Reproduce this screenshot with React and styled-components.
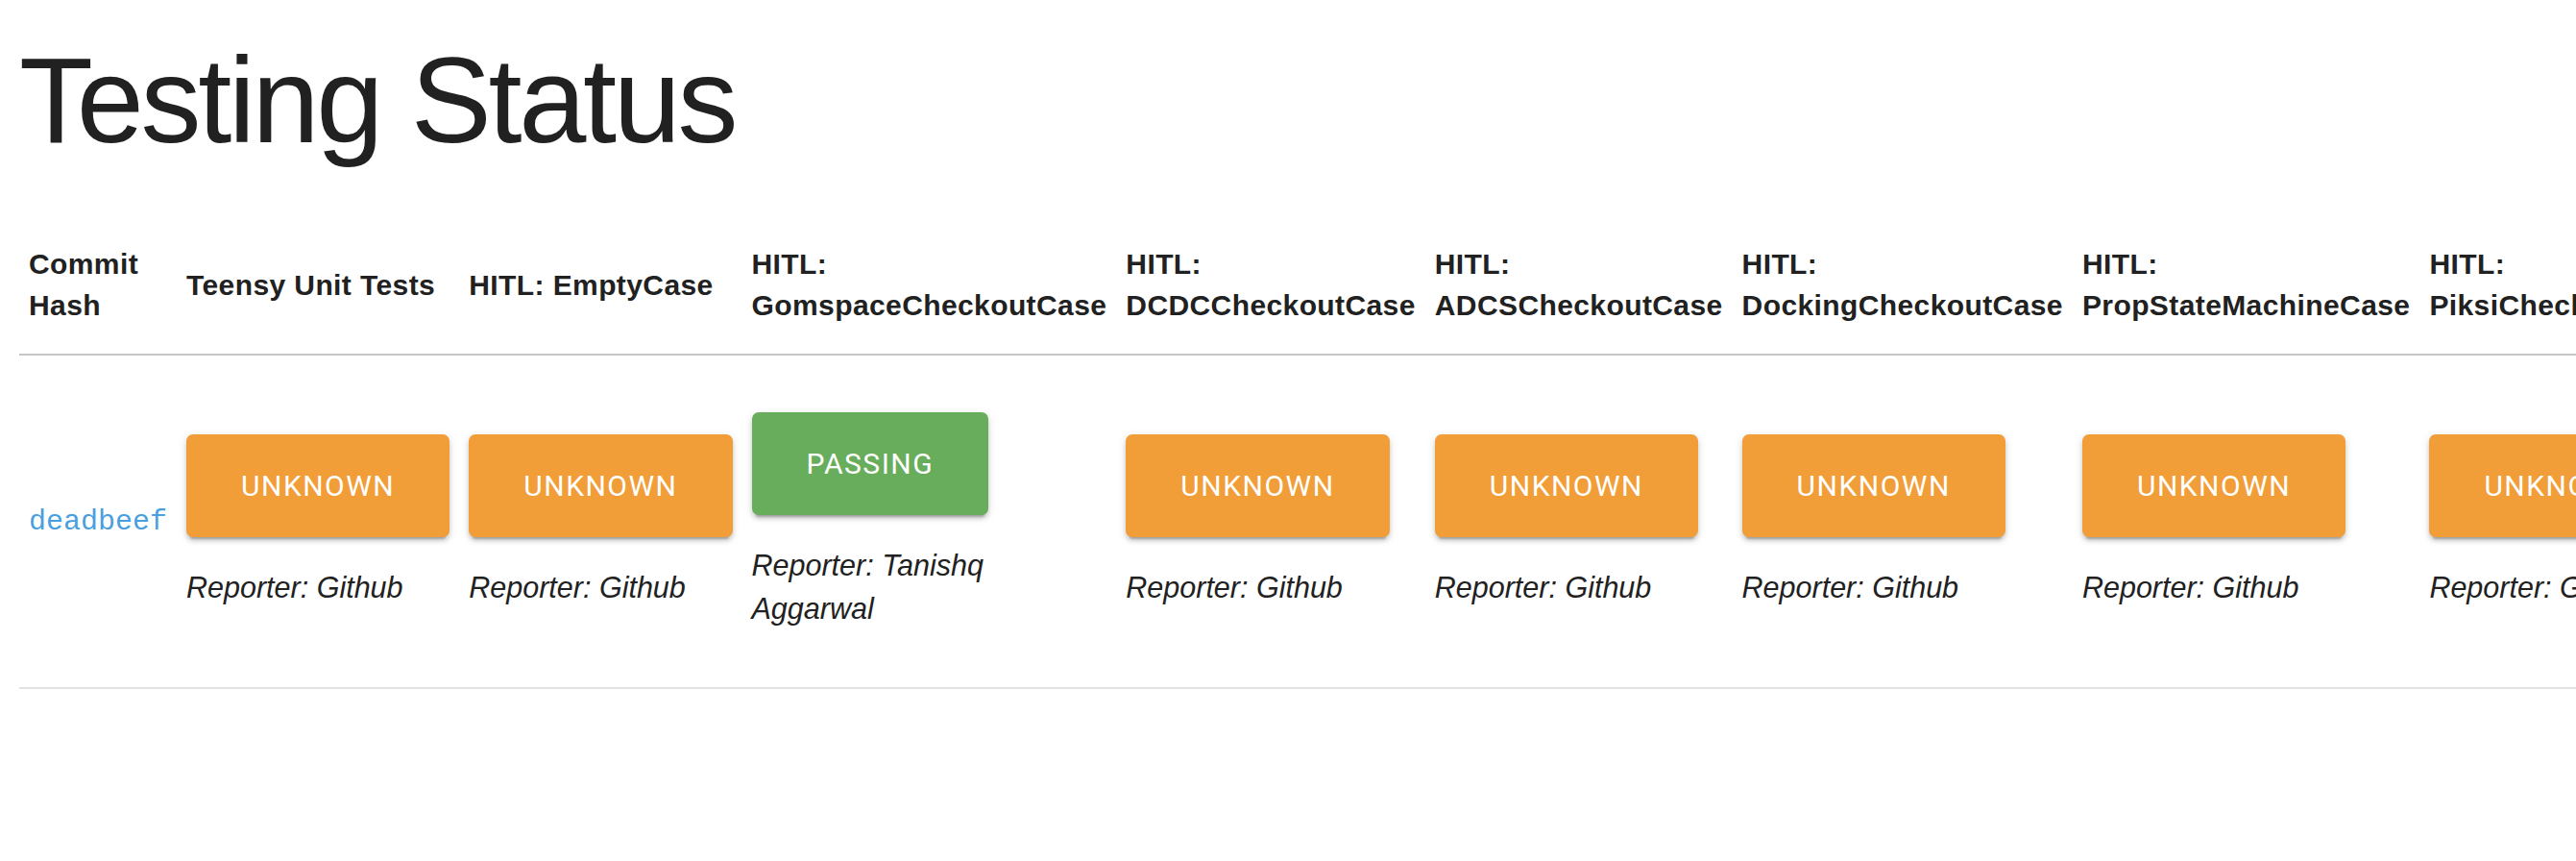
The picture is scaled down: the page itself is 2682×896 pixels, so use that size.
import React from "react"
import styled, { createGlobalStyle } from "styled-components"

const TESTS = [
  { name : "Teensy Unit Tests", status : "UNKNOWN", reporter : "Github" },
  { name : "HITL: EmptyCase", status : "UNKNOWN", reporter : "Github" },
  { name : "HITL: GomspaceCheckoutCase", status : "PASSING", reporter : "Tanishq Aggarwal" },
  { name : "HITL: DCDCCheckoutCase", status : "UNKNOWN", reporter : "Github" },
  { name : "HITL: ADCSCheckoutCase", status : "UNKNOWN", reporter : "Github" },
  { name : "HITL: DockingCheckoutCase", status : "UNKNOWN", reporter : "Github" },
  { name : "HITL: PropStateMachineCase", status : "UNKNOWN", reporter : "Github" },
  { name : "HITL: PiksiCheckoutCase", status : "UNKNOWN", reporter : "Github" },
]

const COMMITS = [
  { hash : "deadbeef", results : TESTS },
]

const STATUS_COLORS = {
  PASSING : "#67ad5b",
  UNKNOWN : "#f19d38",
}

function App() {
  return (
    <Page>
      <GlobalStyle />
      <Title>Testing Status</Title>
      <StatusTable>
        <thead>
          <tr>
            <HeadCell>Commit Hash</HeadCell>
            {TESTS.map(test => (
              <HeadCell key={test.name}>{test.name}</HeadCell>
            ))}
          </tr>
        </thead>
        <tbody>
          {COMMITS.map(commit => (
            <tr key={commit.hash}>
              <Cell>
                <CommitHash>{commit.hash}</CommitHash>
              </Cell>
              {commit.results.map(result => (
                <Cell key={result.name}>
                  <StatusWrap>
                    <StatusButton $status={result.status}>{result.status}</StatusButton>
                  </StatusWrap>
                  <Reporter>Reporter: {result.reporter}</Reporter>
                </Cell>
              ))}
            </tr>
          ))}
        </tbody>
      </StatusTable>
    </Page>
  )
}

export default App

const GlobalStyle = createGlobalStyle`
  html, body {
    margin: 0;
    padding: 0;
    background: #fff;
    overflow: hidden;
  }

  body {
    font-family: "Liberation Sans", Arial, sans-serif;
    color: #212121;
  }
`

const Page = styled.div`
  width: 100vw;
  height: 100vh;
  box-sizing: border-box;
  padding: 29px 20px 0;
  overflow: hidden;
`

const Title = styled.h1`
  margin: 0 0 44px;
  font-family: "Liberation Sans", Arial, sans-serif;
  font-size: 126px;
  font-weight: 400;
  line-height: 1.2;
  letter-spacing: -3.3px;
  color: #212121;
  white-space: nowrap;
`

const StatusTable = styled.table`
  border-collapse: separate;
  border-spacing: 0;
`

const HeadCell = styled.th`
  padding: 29px 10px;
  text-align: left;
  vertical-align: middle;
  font-size: 30px;
  font-weight: 700;
  line-height: 43px;
  letter-spacing: 0.4px;
  color: #212121;
  border-bottom: 2px solid #c6c6c6;
`

const Cell = styled.td`
  padding: 29px 10px;
  vertical-align: middle;
  border-bottom: 2px solid #e2e2e2;
`

const CommitHash = styled.code`
  font-family: "Liberation Mono", "Courier New", monospace;
  font-size: 30px;
  color: #4a9fdf;
`

const StatusWrap = styled.div`
  margin: 30px 0;
`

const StatusButton = styled.button`
  display: inline-block;
  padding: 29px 57px;
  border: none;
  border-radius: 7px;
  background: ${props => STATUS_COLORS[props.$status] || "#9e9e9e"};
  color: #fff;
  font-family: Roboto, "Liberation Sans", sans-serif;
  font-size: 30px;
  font-weight: 400;
  line-height: 49px;
  letter-spacing: 1.5px;
  text-transform: uppercase;
  box-shadow: 0 6px 2px -4px rgba(0, 0, 0, 0.2), 0 4px 4px 0 rgba(0, 0, 0, 0.14), 0 2px 10px 0 rgba(0, 0, 0, 0.12);
  cursor: pointer;
`

const Reporter = styled.p`
  margin: 30px 0;
  font-size: 30.5px;
  font-style: italic;
  line-height: 45px;
  color: #212121;
`
